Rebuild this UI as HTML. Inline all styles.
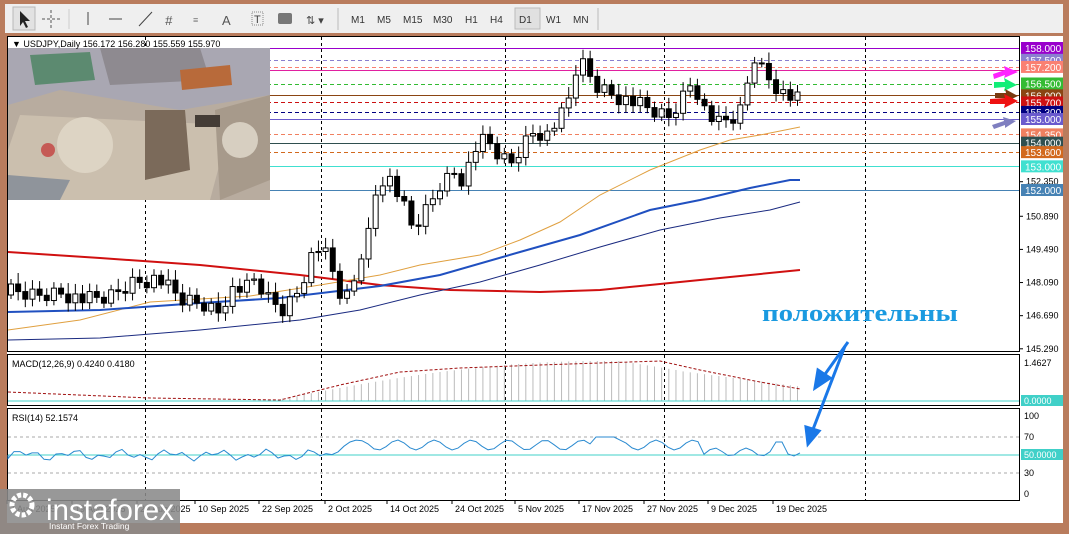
<!DOCTYPE html>
<html><head><meta charset="utf-8"><style>
html,body{margin:0;padding:0;background:#b97c5d;}
svg{display:block}
text{font-family:"Liberation Sans",sans-serif}
text.ru{font-family:"Liberation Serif",serif;font-weight:bold}
</style></head><body>
<svg id="s" width="1069" height="534" xmlns="http://www.w3.org/2000/svg">
<rect width="1069" height="534" fill="#b97c5d"/>
<rect x="5" y="4" width="1058" height="29" fill="#efefef"/>
<rect x="13" y="7" width="22" height="23" fill="#e2e2e2" stroke="#b8b8b8"/>
<path d="M20 11 L20 26 L23 22 L26 28 L28 27 L25 21 L30 21 Z" fill="#222"/>
<path d="M51 10v18M42 19h18" stroke="#555" stroke-width="1" stroke-dasharray="3 2"/>
<line x1="69" y1="9" x2="69" y2="29" stroke="#ccc"/>
<line x1="88" y1="12" x2="88" y2="25" stroke="#444"/>
<line x1="109" y1="19" x2="122" y2="19" stroke="#444"/>
<line x1="139" y1="26" x2="152" y2="12" stroke="#444"/>
<text x="165" y="25" font-size="13" fill="#555" font-style="italic">#</text>
<text x="193" y="23" font-size="9" fill="#777">≡</text>
<text x="222" y="25" font-size="13" fill="#555">A</text>
<rect x="252" y="12" width="11" height="13" fill="none" stroke="#888" stroke-dasharray="1 1"/><text x="254" y="23" font-size="11" fill="#444">T</text>
<rect x="278" y="13" width="14" height="11" rx="2" fill="#777"/>
<text x="306" y="24" font-size="11" fill="#444">⇅ ▾</text>
<line x1="338" y1="8" x2="338" y2="30" stroke="#bbb"/>
<g font-size="10" fill="#333">
<text x="351" y="23">M1</text><text x="377" y="23">M5</text><text x="403" y="23">M15</text><text x="433" y="23">M30</text><text x="465" y="23">H1</text><text x="490" y="23">H4</text>
<rect x="515" y="8" width="25" height="21" fill="#e0e0e0" stroke="#bbb"/>
<text x="519" y="23">D1</text><text x="546" y="23">W1</text><text x="573" y="23">MN</text></g>
<line x1="598" y1="8" x2="598" y2="30" stroke="#bbb"/>
<rect x="7" y="36" width="1056" height="487" fill="#fff"/>
<rect x="7.5" y="36.5" width="1012" height="315" fill="none" stroke="#000"/>
<rect x="7.5" y="354.5" width="1012" height="51" fill="none" stroke="#000"/>
<rect x="7.5" y="408.5" width="1012" height="92" fill="none" stroke="#000"/>
<g id="vd" stroke="#000" stroke-dasharray="3 3"></g>
<g id="hl"></g>
<g id="ma" fill="none"></g>
<g>
<rect x="8" y="48" width="262" height="152" fill="#b8ac9f"/>
<polygon points="8,48 270,48 270,95 180,110 60,90 8,105" fill="#a9a7b2"/>
<polygon points="100,48 200,48 210,80 110,85" fill="#8e8a90"/>
<polygon points="30,55 90,52 95,80 35,85" fill="#5c8a70"/>
<polygon points="180,70 230,65 232,85 182,90" fill="#b86a3a"/>
<polygon points="20,115 230,125 210,200 8,200 8,150" fill="#cbbfae"/>
<circle cx="85" cy="145" r="28" fill="#ddd4c4"/>
<polygon points="145,110 185,110 190,170 145,180" fill="#7b6a5a"/>
<polygon points="215,110 270,95 270,180 220,200" fill="#a79a8b"/>
<circle cx="240" cy="140" r="18" fill="#d7cfc1"/>
<polygon points="8,175 70,180 60,200 8,200" fill="#8f949b"/>
<rect x="195" y="115" width="25" height="12" fill="#443c36"/>
<circle cx="48" cy="150" r="7" fill="#c55a55"/>
</g>
<text x="12" y="47" font-size="9" fill="#000">▼ USDJPY,Daily  156.172 156.280 155.559 155.970</text>
<g id="cd"></g>
<g font-size="9" fill="#000" id="ax"></g>
<g id="macd"></g>
<text x="12" y="367" font-size="9">MACD(12,26,9) 0.4240 0.4180</text>
<line x1="8" y1="401" x2="1019" y2="401" stroke="#40d0c8"/>
<text x="1024" y="366" font-size="9">1.4627</text>
<rect x="1021" y="395" width="42" height="11" fill="#40d0c8"/><text x="1024" y="404" font-size="9" fill="#fff">0.0000</text>
<text x="12" y="421" font-size="9">RSI(14) 52.1574</text>
<line x1="8" y1="437" x2="1019" y2="437" stroke="#aaa" stroke-dasharray="3 3"/>
<line x1="8" y1="473" x2="1019" y2="473" stroke="#aaa" stroke-dasharray="3 3"/>
<line x1="8" y1="455" x2="1019" y2="455" stroke="#40d0c8"/>
<path id="rsi" fill="none" stroke="#2a8ad0" stroke-width="1"/>
<g font-size="9"><text x="1024" y="419">100</text><text x="1024" y="440">70</text><text x="1024" y="476">30</text><text x="1024" y="497">0</text></g>
<rect x="1021" y="449" width="42" height="11" fill="#40d0c8"/><text x="1024" y="458" font-size="9" fill="#fff">50.0000</text>
<g font-size="9" id="dt"></g>
<text class="ru" x="762" y="321" font-size="24" fill="#1a9ae0" textLength="196" lengthAdjust="spacingAndGlyphs">положительны</text>
<g stroke="#1a78e8" stroke-width="3" fill="#1a78e8">
<line x1="848" y1="342" x2="823" y2="377"/><polygon points="815,388 818,370 830,378"/>
<line x1="845" y1="346" x2="812" y2="432"/><polygon points="808,444 806,427 819,431"/>
</g>
<g>
<polygon points="993,74 1005,70 1004,66 1018,72 1004,78 1005,75 994,79" fill="#ff22ff"/>
<polygon points="994,82 1005,82 1004,78 1017,85 1004,91 1005,87 994,88" fill="#11ee77"/>
<polygon points="995,93 1006,93 1005,89 1018,96 1005,102 1006,98 995,98" fill="#7a3a10"/>
<polygon points="990,99 1005,98 1004,94 1018,101 1004,108 1005,104 990,104" fill="#ee1111"/>
<polygon points="992,125 1004,121 1003,117 1016,121 1005,128 1005,125 994,129" fill="#7f7fc0"/>
</g>
<rect x="0" y="489" width="180" height="45" fill="#8a8a8a" opacity="0.88"/>
<circle cx="22" cy="505" r="10" fill="none" stroke="#fff" stroke-width="5" stroke-dasharray="4 2"/>
<text x="46" y="520" font-size="30" fill="#fff" textLength="128" lengthAdjust="spacingAndGlyphs">instaforex</text>
<text x="49" y="529" font-size="8.5" fill="#fff">Instant Forex Trading</text>
</svg>
<script>
const S='http://www.w3.org/2000/svg';
function el(p,t,a,txt){const e=document.createElementNS(S,t);for(const k in a)e.setAttribute(k,a[k]);if(txt)e.textContent=txt;document.getElementById(p).appendChild(e);return e;}
const Y=p=>48+(158-p)*23.667;
[145,321,505,664,865].forEach(x=>el('vd','line',{x1:x+.5,y1:37,x2:x+.5,y2:500}));
const lv=[[158,'#9900cc',0,'158.000'],[157.5,'#8a7fd0',1,'157.500'],[157.2,'#fa8072',1,'157.200'],[157.05,'#e020a0',0,null],[156.5,'#33bb33',1,'156.500'],[156,'#8b4513',0,'156.000'],[155.7,'#cc1111',1,'155.700'],[155.3,'#000080',1,'155.300'],[155,'#6a5acd',0,'155.000'],[154.35,'#f08060',1,'154.350'],[154,'#2f4f4f',0,'154.000'],[153.6,'#d2691e',1,'153.600'],[153,'#40e0d0',0,'153.000'],[152,'#4682b4',0,'152.000']];
lv.forEach(l=>{const y=Math.round(Y(l[0]))+.5;el('hl','line',{x1:8,y1:y,x2:1019,y2:y,stroke:l[1],'stroke-dasharray':l[2]?'4 3':'none'});});
[[150.89,'150.890'],[149.49,'149.490'],[148.09,'148.090'],[146.69,'146.690'],[145.29,'145.290'],[152.35,'152.350']].forEach(t=>{const y=Y(t[0]);el('ax','line',{x1:1019,y1:y,x2:1023,y2:y,stroke:'#000'});el('ax','text',{x:1026,y:y+3},t[1]);});
lv.forEach(l=>{if(!l[3])return;const y=Y(l[0]);el('ax','rect',{x:1021,y:y-6,width:42,height:12,fill:l[1]});el('ax','text',{x:1025,y:y+4,fill:'#fff','font-size':10},l[3]);});
const pts=[[0,292],[10,296],[20,292],[30,300],[40,298],[50,282],[60,278],[70,300],[80,305],[85,312],[90,290],[98,288],[100,280],[106,300],[112,310],[118,290],[125,245],[130,258],[136,300],[140,295],[142,265],[147,232],[150,190],[154,172],[160,200],[165,230],[172,205],[176,185],[182,172],[186,180],[190,150],[195,140],[200,155],[205,165],[210,145],[215,130],[220,135],[228,110],[232,70],[235,65],[240,85],[248,95],[258,105],[262,110],[270,118],[275,100],[280,80],[285,110],[290,125],[297,118],[300,110],[305,55],[310,75],[318,95],[323,100]];
function yAt(x){for(let i=0;i<pts.length-1;i++){if(x>=pts[i][0]&&x<=pts[i+1][0]){const t=(x-pts[i][0])/(pts[i+1][0]-pts[i][0]);return pts[i][1]+t*(pts[i+1][1]-pts[i][1]);}}return 100;}
let prev=295;const N=111;
for(let i=0;i<N;i++){const x=11+i*7.15;const c=yAt(i*323/110)+((i*37)%11-5)*1.6;const o=prev;const top=Math.min(o,c),bot=Math.max(o,c);const w=5+((i*13)%7);
el('cd','line',{x1:x,y1:top-w,x2:x,y2:bot+w*0.8,stroke:'#000'});
el('cd','rect',{x:x-2.5,y:top,width:5,height:Math.max(1,bot-top),fill:c<o?'#fff':'#000',stroke:'#000','stroke-width':1});prev=c;}
function path(p,col,w){el('ma','path',{d:'M'+p.map(q=>q.join(',')).join(' L'),stroke:col,'stroke-width':w,fill:'none'});}
path([[8,252],[100,258],[200,265],[300,275],[380,285],[450,290],[540,292],[600,290],[650,285],[720,278],[800,270]],'#d01010',2);
path([[8,330],[80,320],[150,302],[250,296],[320,285],[380,275],[420,265],[480,255],[520,240],[560,222],[600,195],[650,170],[700,150],[730,140],[760,135],[800,127]],'#e0a040',1);
path([[8,312],[100,310],[200,303],[280,298],[330,292],[380,286],[440,275],[520,252],[580,235],[650,210],[700,200],[750,188],[790,180],[800,180]],'#2050c0',2);
path([[8,340],[100,338],[200,330],[300,320],[360,310],[420,295],[480,282],[540,265],[600,247],[660,230],[720,218],[770,210],[800,202]],'#1a2a80',1);
for(let i=0;i<N;i++){const x=11+i*7.15;let h;if(x<280)h=0;else{h=Math.max(0,40*Math.sin(Math.min(1,(x-270)/330)*Math.PI/2));if(x>620)h=40-(x-620)*0.16;if(x>680)h=Math.max(14,30-(x-680)*0.13);}
if(h>1)el('macd','line',{x1:x,y1:401-h,x2:x,y2:401,stroke:'#bbb'});}
el('macd','path',{d:'M8,392 L150,398 L280,400 L340,385 L400,372 L460,368 L540,365 L600,363 L660,361 L700,370 L760,382 L800,389',stroke:'#a01010','stroke-dasharray':'3 2',fill:'none'});
let d='M8,455';for(let x=8;x<=800;x+=6){let v=455+Math.sin(x*0.3)*3+Math.cos(x*0.13)*3;if(x>335&&x<380)v=455-15*Math.sin((x-335)/45*Math.PI);if(x>=380&&x<700)v=445+Math.sin(x*0.17)*5;if(x>590&&x<620)v=437;if(x>=700)v=452+Math.sin(x*0.2)*4;if(x>770&&x<785)v=442;d+=' L'+x+','+v.toFixed(1);}
document.getElementById('rsi').setAttribute('d',d);
[[198,'10 Sep 2025'],[262,'22 Sep 2025'],[328,'2 Oct 2025'],[390,'14 Oct 2025'],[455,'24 Oct 2025'],[518,'5 Nov 2025'],[582,'17 Nov 2025'],[647,'27 Nov 2025'],[711,'9 Dec 2025'],[776,'19 Dec 2025'],[140,'29 Aug 2025'],[75,'19 Aug 2025'],[10,'7 Aug 2025']].forEach(t=>{el('dt','text',{x:t[0],y:512},t[1]);el('dt','line',{x1:t[0]-3,y1:500,x2:t[0]-3,y2:504,stroke:'#000'});});
</script>
</body></html>
